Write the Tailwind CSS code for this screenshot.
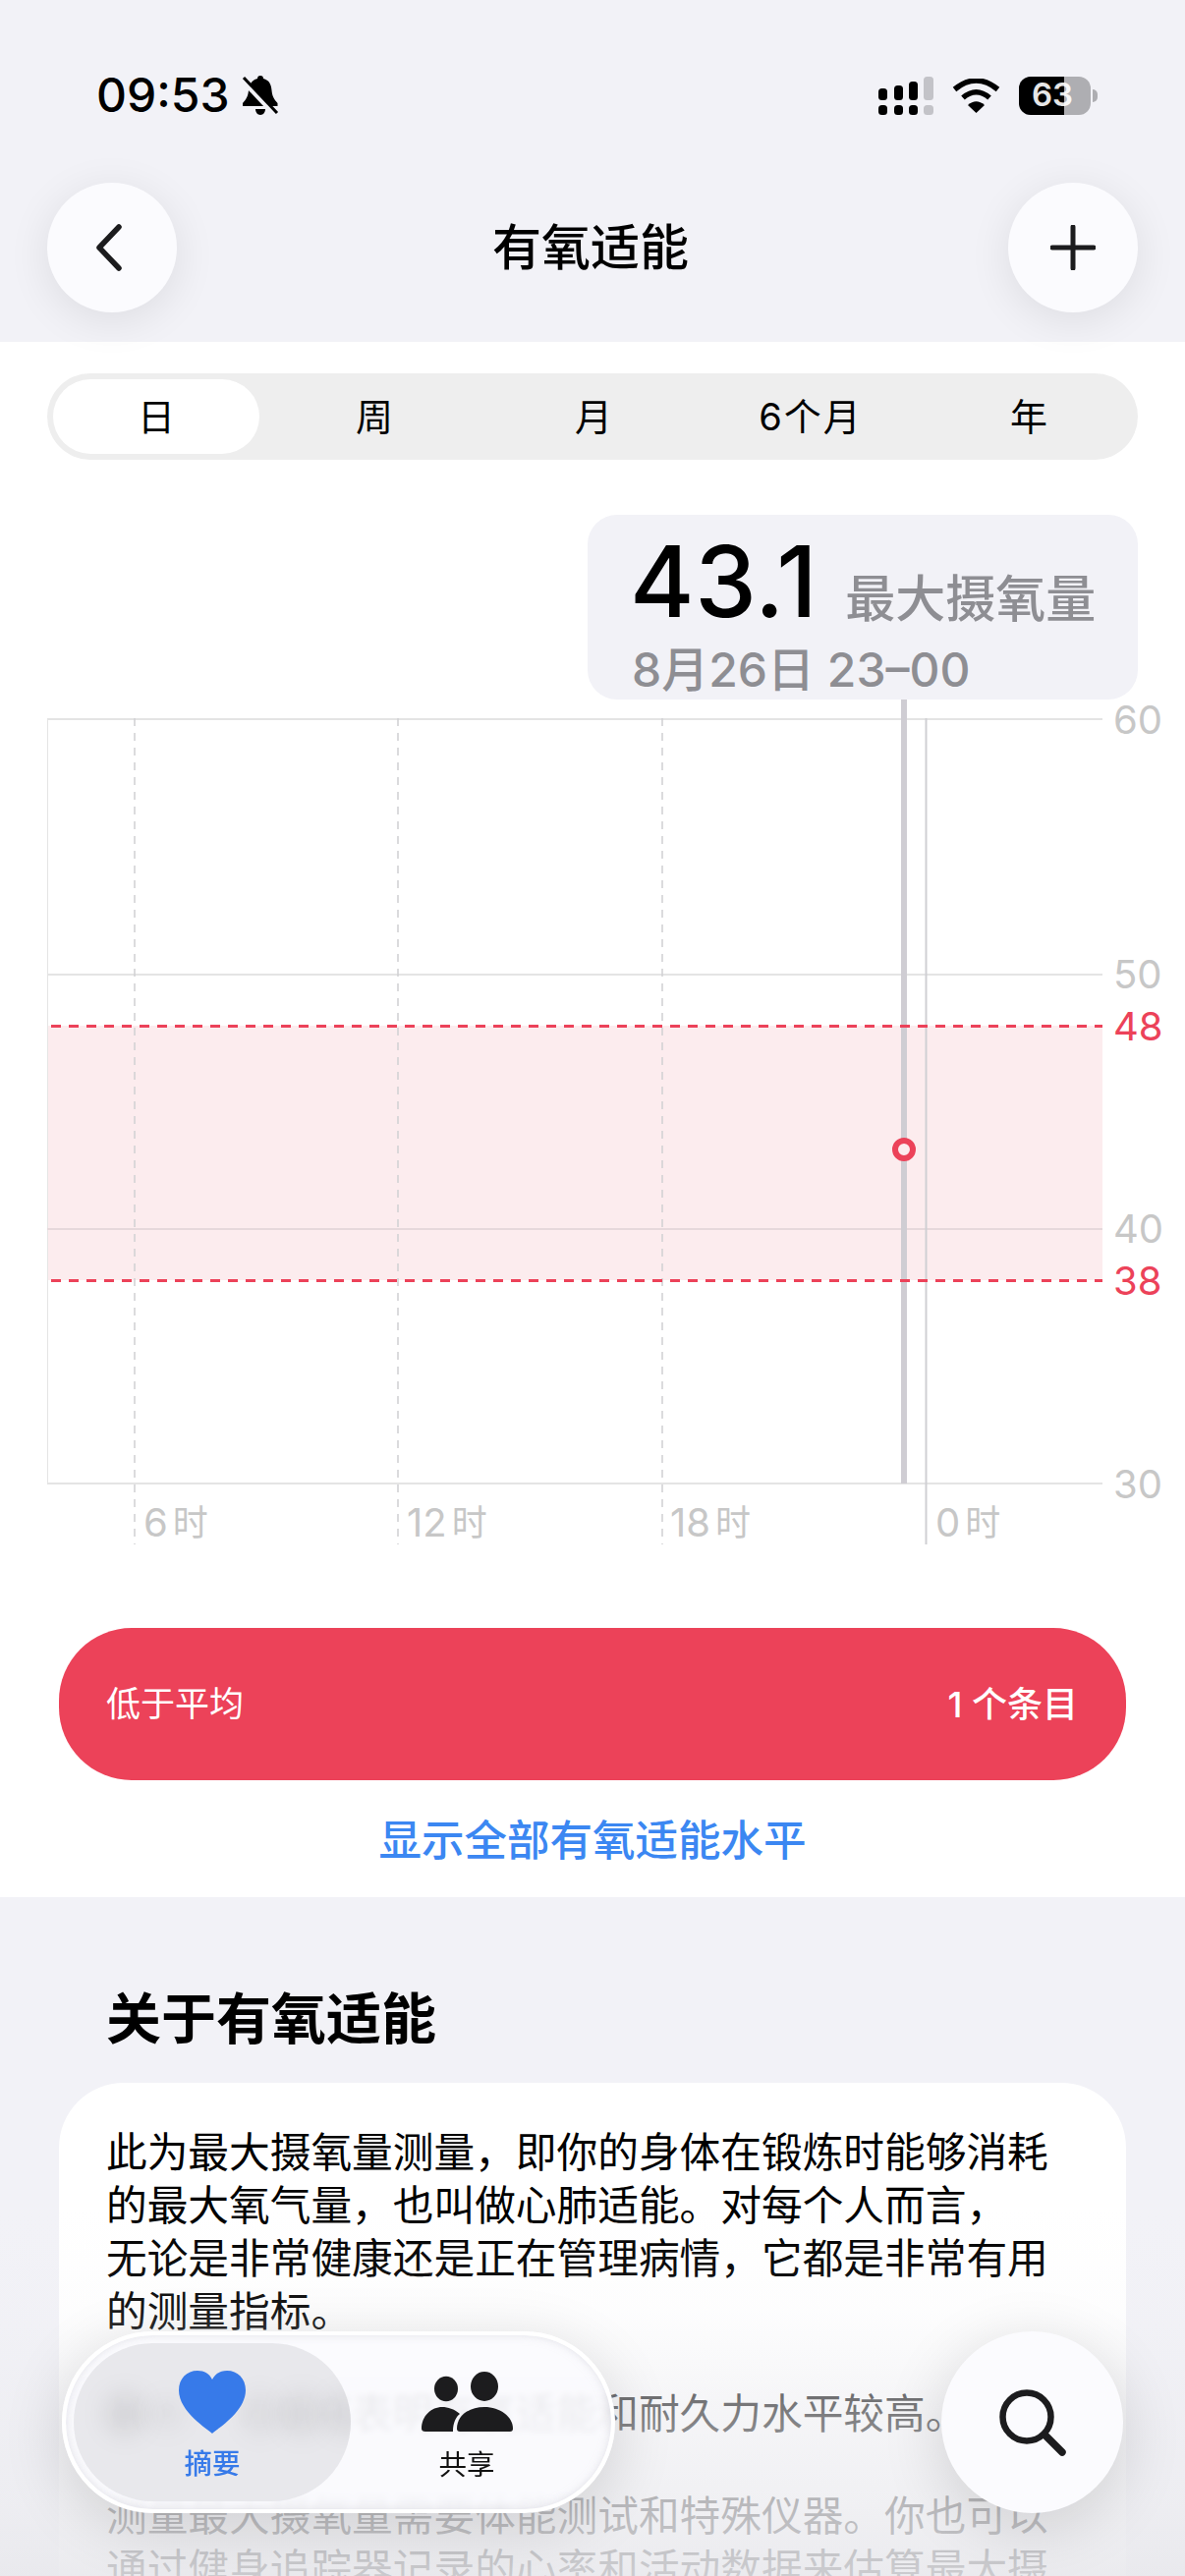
<!DOCTYPE html>
<html lang="zh-CN">
<head>
  <meta charset="UTF-8">
  <meta name="viewport" content="width=device-width, initial-scale=1.0">
  <title>有氧适能</title>
  <script src="https://cdn.jsdelivr.net/npm/@tailwindcss/browser@4"></script>
</head>
<body class="bg-[#f2f2f7]">
<div class="relative w-[1206px] h-[2622px] overflow-hidden bg-[#f2f2f7] font-[Inter,'Noto_Sans_CJK_SC',sans-serif] text-black">

  <!-- Status bar + nav -->
  <header class="relative z-10 h-[348px] bg-[#f2f2f7]">
    <div class="flex items-center justify-between h-[78px] pt-[58px] pl-[98px] pr-[89px] box-content">
      <div class="flex items-center gap-[11px]">
        <span class="text-[48px] leading-[40px] font-[550]">09:53</span>
        <!-- silent bell -->
        <svg class="w-[40px] h-[40px]" viewBox="0 0 40 40">
          <path d="M20 0c2 0 3 1.300 3 3 6 1.500 8 6 8.500 12 .5 6 2.500 9 6 13v3H2v-3c3.500-4 5.500-7 6-13 .5-6 3-10.500 9-12 0-1.700 1-3 3-3z" fill="#000"/>
          <path d="M15 34h10c0 3-2 6-5 6s-5-3-5-6z" fill="#000"/>
          <path d="M1 4l34 36" stroke="#f2f2f7" stroke-width="5"/>
          <path d="M3 2l34 36" stroke="#000" stroke-width="3"/>
        </svg>
      </div>
      <div class="flex items-center gap-[19px]">
        <!-- dual sim signal -->
        <svg class="w-[56px] h-[39px]" viewBox="0 0 56 39">
          <g fill="#000">
            <rect x="0" y="12" width="9" height="12" rx="3.500"/>
            <rect x="16" y="9" width="9" height="15" rx="3.500"/>
            <rect x="31" y="5" width="9" height="19" rx="3.500"/>
            <rect x="0" y="29" width="9" height="10" rx="3.500"/>
            <rect x="16" y="29" width="9" height="10" rx="3.500"/>
            <rect x="31" y="29" width="9" height="10" rx="3.500"/>
          </g>
          <g fill="#c3c3c8">
            <rect x="46" y="0" width="10" height="24" rx="3.500"/>
            <rect x="46" y="29" width="10" height="10" rx="3.500"/>
          </g>
        </svg>
        <svg class="w-[49px] h-[35px]" viewBox="0 0 49 35">
          <path d="M2.500 11Q24.500 -7 46.500 11" fill="none" stroke="#000" stroke-width="5.500"/>
          <path d="M11 19.500Q24.500 8 38 19.500" fill="none" stroke="#000" stroke-width="5.500"/>
          <path d="M24.500 35L16 27Q24.500 19.500 33 27Z" fill="#000"/>
        </svg>
        <div class="flex items-center gap-[2px]">
          <div class="relative w-[73px] h-[39px] rounded-[12px] bg-[#aeaeb2] overflow-hidden">
            <div class="h-full w-[46px] bg-black"></div>
            <span class="absolute inset-0 pl-[13px] flex items-center text-[33px] font-semibold text-white/90">63</span>
          </div>
          <div class="w-[5px] h-[13px] rounded-r-full bg-[#aeaeb2]"></div>
        </div>
      </div>
    </div>

    <div class="flex items-center justify-between px-[48px] mt-[50px]">
      <button class="w-[132px] h-[132px] rounded-full bg-[#fbfbfe] flex items-center justify-center shadow-[0_8px_44px_rgba(0,0,0,0.09)]">
        <svg class="w-[30px] h-[48px] -ml-[6px]" viewBox="0 0 30 48">
          <path d="M25 3L5 24l20 21" fill="none" stroke="#1c1c1e" stroke-width="5.500" stroke-linecap="round" stroke-linejoin="round"/>
        </svg>
      </button>
      <h1 class="text-[50px] leading-[60px] font-medium mr-[4px]">有氧适能</h1>
      <button class="w-[132px] h-[132px] rounded-full bg-[#fbfbfe] flex items-center justify-center shadow-[0_8px_44px_rgba(0,0,0,0.09)]">
        <svg class="w-[46px] h-[46px]" viewBox="0 0 46 46">
          <path d="M23 2v42M2 23h42" fill="none" stroke="#1c1c1e" stroke-width="5" stroke-linecap="round"/>
        </svg>
      </button>
    </div>
  </header>

  <!-- Chart section -->
  <section class="relative h-[1583px] bg-white">
    <div class="absolute left-[48px] top-[32px] w-[1110px] h-[88px] rounded-full bg-[#eeeeee] grid grid-cols-5 items-center text-[38px]">
      <div class="absolute left-[6px] top-[6px] w-[210px] h-[76px] rounded-full bg-white"></div>
      <span class="relative text-center">日</span>
      <span class="text-center">周</span>
      <span class="text-center pl-[2px]">月</span>
      <span class="text-center tracking-[2px]">6个月</span>
      <span class="text-center">年</span>
    </div>

    <!-- chart canvas, coordinates are section relative (page y - 348) -->
    <svg class="absolute left-0 top-0 w-[1206px] h-[1300px]" viewBox="0 0 1206 1300">
      <rect x="48" y="696" width="1074" height="259" fill="#fcecee"/>
      <path d="M48.500 383V1162" stroke="#e5e5e5" stroke-width="1"/>
      <path d="M48 384H1122M48 644H1122M48 1162H1122" stroke="#e4e4e4" stroke-width="2"/>
      <path d="M48 903H1122" stroke="#e6d8db" stroke-width="2"/>
      <path d="M137 383V1224M405 383V1224M674 383V1224" stroke="#cfcfd2" stroke-width="1.500" stroke-dasharray="8 7"/>
      <path d="M942.500 383V1224" stroke="#cfcfd3" stroke-width="2"/>
      <path d="M920 364V1162" stroke="#cfcdd3" stroke-width="6"/>
      <path d="M52 696.500H1122M52 955.500H1122" stroke="#ec4259" stroke-width="3" stroke-dasharray="10 8"/>
      <circle cx="920" cy="822" r="9" fill="#fcecee" stroke="#ec4259" stroke-width="6"/>
    </svg>

    <div class="absolute left-[1133px] top-[362px] text-[40px] leading-[46px] text-[#c7c7c7]">60</div>
    <div class="absolute left-[1133px] top-[621px] text-[40px] leading-[46px] text-[#c7c7c7]">50</div>
    <div class="absolute left-[1133px] top-[674px] text-[40px] leading-[46px] text-[#ec4259]">48</div>
    <div class="absolute left-[1133px] top-[880px] text-[40px] leading-[46px] text-[#c7c7c7]">40</div>
    <div class="absolute left-[1133px] top-[933px] text-[40px] leading-[46px] text-[#ec4259]">38</div>
    <div class="absolute left-[1133px] top-[1140px] text-[40px] leading-[46px] text-[#c7c7c7]">30</div>

    <div class="absolute left-[146px] top-[1179px] flex items-center gap-[5px] text-[40px] leading-[46px] text-[#c7c7c7]"><span>6</span><span class="text-[36px]">时</span></div>
    <div class="absolute left-[414px] top-[1179px] flex items-center gap-[5px] text-[40px] leading-[46px] text-[#c7c7c7]"><span>12</span><span class="text-[36px]">时</span></div>
    <div class="absolute left-[682px] top-[1179px] flex items-center gap-[5px] text-[40px] leading-[46px] text-[#c7c7c7]"><span>18</span><span class="text-[36px]">时</span></div>
    <div class="absolute left-[952px] top-[1179px] flex items-center gap-[5px] text-[40px] leading-[46px] text-[#c7c7c7]"><span>0</span><span class="text-[36px]">时</span></div>

    <!-- selected value tooltip -->
    <div class="absolute left-[598px] top-[176px] w-[560px] h-[188px] rounded-[30px] bg-[#f2f2f7] pl-[46px]">
      <div class="flex items-baseline gap-[28px] h-[120px] pt-[18px]">
        <span class="-ml-[3px] text-[100px] leading-[100px] font-medium tracking-[0.5px]">43.1</span>
        <span class="text-[51px] leading-[60px] font-medium text-[#8e8e93]">最大摄氧量</span>
      </div>
      <div class="-ml-[1px] mt-[11px] text-[48px] leading-[54px] font-medium text-[#8e8e93]">8月26日 23–00</div>
    </div>

    <!-- classification -->
    <div class="absolute left-[60px] top-[1309px] w-[1086px] h-[155px] rounded-[74px] bg-[#ec4259] text-white flex items-center justify-between pl-[48px] pr-[49px] text-[35px]">
      <span>低于平均</span>
      <span class="font-medium text-[36px]">1 个条目</span>
    </div>
    <a class="absolute left-0 right-0 top-[1497px] text-center text-[43.500px] leading-[56px] font-medium text-[#3b87f2]">显示全部有氧适能水平</a>
  </section>

  <!-- About section -->
  <section class="pt-[90px] px-[60px]">
    <h2 class="pl-[48px] text-[56px] leading-[68px] font-bold">关于有氧适能</h2>
    <div class="mt-[31px] h-[800px] rounded-[66px] bg-white pl-[48px] pr-[40px] pt-[44px] text-[41.700px] leading-[54px]">
      <p>此为最大摄氧量测量，即你的身体在锻炼时能够消耗<br>的最大氧气量，也叫做心肺适能。对每个人而言，<br>无论是非常健康还是正在管理病情，它都是非常有用<br>的测量指标。</p>
      <p class="mt-[50px]">最大摄氧量高表明有氧适能和耐久力水平较高。</p>
      <p class="mt-[50px]">测量最大摄氧量需要体能测试和特殊仪器。你也可以<br>通过健身追踪器记录的心率和活动数据来估算最大摄</p>
    </div>
  </section>

  <!-- bottom fade over the scrolled content -->
  <div class="absolute left-0 right-0 bottom-0 h-[372px] bg-[linear-gradient(to_bottom,rgba(236,236,240,0)_0%,rgba(236,236,240,0.1)_27%,rgba(236,236,240,0.5)_53%,rgba(236,236,240,0.78)_80%,rgba(232,232,236,0.88)_100%)]"></div>

  <!-- tab bar -->
  <nav class="absolute left-[63px] top-[2373px] w-[563px] h-[185px] rounded-full border-[4px] border-white bg-[#fbfbfe]/88 backdrop-blur-[3px] shadow-[0_14px_64px_rgba(0,0,0,0.14),inset_0_0_8px_rgba(200,200,210,0.5)] flex items-stretch">
    <div class="absolute left-[8px] top-[8px] w-[282px] h-[161px] rounded-full bg-[#e6e6ea]/90 overflow-hidden">
      <!-- text blurred behind the glass -->
      <div class="absolute left-[32px] top-[50px] w-[40px] h-[44px] rounded-full bg-black/8 blur-md"></div>
      <div class="absolute left-[76px] top-[54px] w-[36px] h-[36px] rounded-full bg-black/4 blur-md"></div>
      <div class="absolute left-[172px] top-[50px] w-[36px] h-[44px] rounded-full bg-black/5 blur-md"></div>
      <div class="absolute left-[212px] top-[50px] w-[40px] h-[44px] rounded-full bg-black/7 blur-md"></div>
      <div class="absolute left-[256px] top-[50px] w-[40px] h-[44px] rounded-full bg-black/7 blur-md"></div>
    </div>
    <div class="relative w-[298px] flex flex-col items-center pt-[36px]">
      <svg class="w-[68px] h-[64px]" viewBox="0 0 68 64">
        <path d="M34 64C30 60 0 42 0 20 0 8 8 0 19 0c7 0 12 3 15 9 3-6 8-9 15-9 11 0 19 8 19 20 0 22-30 40-34 44z" fill="#377ae9"/>
      </svg>
      <span class="mt-[15px] text-[28.500px] leading-[32px] font-medium text-[#377ae9]">摘要</span>
    </div>
    <div class="relative w-[220px] flex flex-col items-center pt-[37px]">
      <svg class="w-[93px] h-[62px]" viewBox="0 0 93 62">
        <g fill="#1c1c1e">
          <ellipse cx="25" cy="17.500" rx="12" ry="12.700"/>
          <ellipse cx="64" cy="15" rx="14" ry="15"/>
          <path d="M0 58C0 45 10 36 21 36c6 0 12 2 18 7C35 46 32 52 32 61H4Q0 61 0 58z"/>
          <path d="M36 58C36 45 48 36 64 36s29 10 29 22q0 3-3 3H39q-3 0-3-3z"/>
        </g>
      </svg>
      <span class="mt-[17px] text-[28.500px] leading-[32px] font-normal text-[#111]">共享</span>
    </div>
  </nav>

  <button class="absolute left-[958px] top-[2373px] w-[185px] h-[185px] rounded-full bg-[#fbfbfe] shadow-[0_14px_64px_rgba(0,0,0,0.14)] flex items-center justify-center">
    <svg class="w-[72px] h-[72px]" viewBox="0 0 72 72">
      <circle cx="30" cy="30" r="24.500" fill="none" stroke="#1c1c1e" stroke-width="6.500"/>
      <path d="M48 48l18 18" stroke="#1c1c1e" stroke-width="7.500" stroke-linecap="round"/>
    </svg>
  </button>
</div>
</body>
</html>
